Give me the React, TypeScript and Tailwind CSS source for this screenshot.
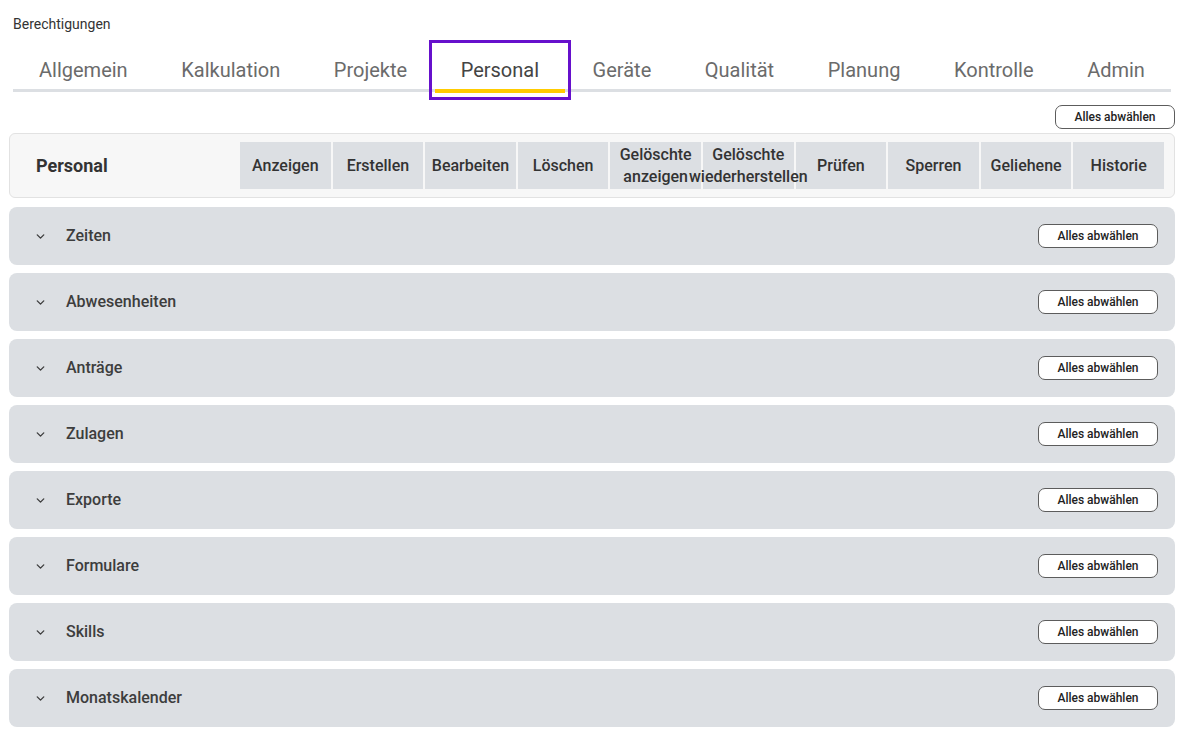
import React from "react";

const tabs = [
  "Allgemein",
  "Kalkulation",
  "Projekte",
  "Personal",
  "Geräte",
  "Qualität",
  "Planung",
  "Kontrolle",
  "Admin",
];

const columns = [
  "Anzeigen",
  "Erstellen",
  "Bearbeiten",
  "Löschen",
  "Gelöschte anzeigen",
  "Gelöschte wiederherstellen",
  "Prüfen",
  "Sperren",
  "Geliehene",
  "Historie",
];

const sections = [
  "Zeiten",
  "Abwesenheiten",
  "Anträge",
  "Zulagen",
  "Exporte",
  "Formulare",
  "Skills",
  "Monatskalender",
];

function DeselectButton() {
  return (
    <button className="h-[24px] w-[120px] shrink-0 rounded-[7px] border border-[#5c5c5c] bg-white text-[12px] font-medium leading-none text-[#222]">
      Alles abwählen
    </button>
  );
}

function Chevron() {
  return (
    <svg
      width="13"
      height="13"
      viewBox="0 0 24 24"
      fill="none"
      stroke="#3d3d3d"
      strokeWidth="2.5"
      strokeLinecap="round"
      strokeLinejoin="round"
    >
      <path d="m6 9 6 6 6-6" />
    </svg>
  );
}

export default function App() {
  return (
    <div className="h-[734px] w-[1180px] overflow-hidden bg-white pl-[9px] pr-[5px] pt-[14px] font-['Roboto',sans-serif]">
      <div className="pl-[4px] text-[14px] leading-[20px] text-[#333]">Berechtigungen</div>

      {/* module tabs */}
      <div className="mx-[4px] mt-[12px] flex justify-between border-b-[3px] border-[#dcdfe3]">
        {tabs.map((t) => {
          const active = t === "Personal";
          return (
            <div
              key={t}
              className={
                active
                  ? "-mb-[5px] flex h-[48px] flex-col px-[26px] outline-[3px] outline-offset-[3px] outline-[#6610cc] outline-solid"
                  : "-mb-[5px] flex h-[48px] flex-col px-[26px]"
              }
            >
              <div
                className={
                  active
                    ? "flex h-[43px] items-center justify-center pt-[5px] text-[20px] text-[#444]"
                    : "flex h-[43px] items-center justify-center pt-[5px] text-[20px] text-[#6b6b6b]"
                }
              >
                {t}
              </div>
              {active ? <div className="-mx-[26px] h-[4px] bg-[#ffcc00]" /> : null}
            </div>
          );
        })}
      </div>

      <div className="mt-[13px] flex justify-end">
        <DeselectButton />
      </div>

      {/* permission header */}
      <div className="mt-[4px] flex h-[65px] items-center rounded-[6px] border border-[#e2e2e2] bg-[#f7f7f7] pr-[10px]">
        <div className="w-[230px] pl-[26px] text-[18px] font-bold text-[#333]">Personal</div>
        <div className="grid h-[47px] flex-1 grid-cols-10 gap-[2px]">
          {columns.map((c) => (
            <div
              key={c}
              className="flex min-w-0 items-center justify-center bg-[#dcdfe3] text-[16px] font-medium leading-[22px] text-[#333]"
            >
              <span className="relative z-10 text-center">{c}</span>
            </div>
          ))}
        </div>
      </div>

      {/* sections */}
      <div className="mt-[9px] flex flex-col gap-[8px]">
        {sections.map((s) => (
          <div
            key={s}
            className="flex h-[58px] items-center rounded-[8px] bg-[#dcdfe3] pl-[25px] pr-[17px]"
          >
            <Chevron />
            <div className="ml-[19px] flex-1 text-[16px] font-medium text-[#3d3d3d]">{s}</div>
            <DeselectButton />
          </div>
        ))}
      </div>
    </div>
  );
}
